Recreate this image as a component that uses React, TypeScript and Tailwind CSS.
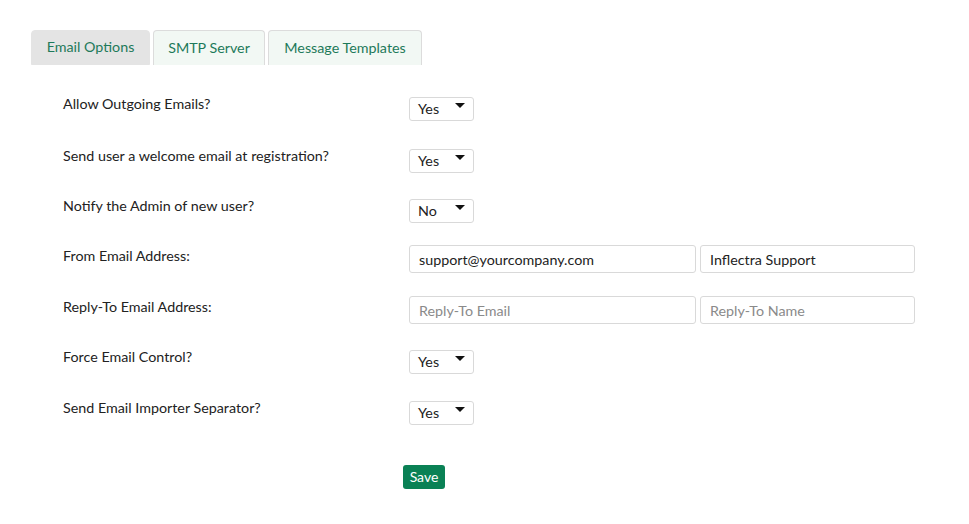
import { useState } from 'react';

const font = { fontFamily: 'Lato, "Open Sans", sans-serif' };

function Caret() {
  return (
    <svg width="10" height="6" viewBox="0 0 10 6" className="absolute right-[8px] top-[5px]">
      <path d="M0 0 L10 0 L5 5 Z" fill="#111" />
    </svg>
  );
}

function Pick({ value }: { value: string }) {
  return (
    <div className="relative mt-[3px] h-[24px] w-[65px] rounded-[3px] border border-[#d9d9d9] bg-white pl-[8px] text-[14.3px] leading-[22px] text-[#222]">
      {value}
      <Caret />
    </div>
  );
}

function Field({ value, placeholder, w }: { value?: string; placeholder: string; w: string }) {
  return (
    <input
      defaultValue={value}
      placeholder={placeholder}
      className={`mt-[-1px] h-[28px] ${w} rounded-[3px] border border-[#d9d9d9] bg-white px-[9px] text-[14.3px] text-[#222] outline-none placeholder:text-[#8a8a8a]`}
      style={font}
    />
  );
}

export default function App() {
  const [tab, setTab] = useState('Email Options');
  const tabs = [
    { name: 'Email Options', w: 'w-[119px]' },
    { name: 'SMTP Server', w: 'w-[112px]' },
    { name: 'Message Templates', w: 'w-[154px]' },
  ];

  const rows = [
    { label: 'Allow Outgoing Emails?', h: 'h-[52px]', kind: 'pick', value: 'Yes' },
    { label: 'Send user a welcome email at registration?', h: 'h-[50px]', kind: 'pick', value: 'Yes' },
    { label: 'Notify the Admin of new user?', h: 'h-[50px]', kind: 'pick', value: 'No' },
    { label: 'From Email Address:', h: 'h-[51px]', kind: 'from' },
    { label: 'Reply-To Email Address:', h: 'h-[50px]', kind: 'reply' },
    { label: 'Force Email Control?', h: 'h-[51px]', kind: 'pick', value: 'Yes' },
    { label: 'Send Email Importer Separator?', h: 'h-[66px]', kind: 'pick', value: 'Yes' },
  ];

  return (
    <div className="min-h-[524px] w-[969px] bg-white pl-[31px] pt-[30px]" style={font}>
      <div className="flex gap-[3px]">
        {tabs.map((t) => (
          <button
            key={t.name}
            onClick={() => setTab(t.name)}
            className={`h-[35px] ${t.w} rounded-t-[4px] border pb-[1px] text-[14.3px] text-[#1e7a5a] ${
              tab === t.name ? 'border-[#e4e4e4] bg-[#e4e4e4]' : 'border-b-0 border-[#dcdcdc] bg-[#f2f8f4]'
            }`}
            style={font}
          >
            {t.name}
          </button>
        ))}
      </div>

      <div className="mt-[29px] pl-[32px]">
        {rows.map((r) => (
          <div key={r.label} className={`flex items-start ${r.h}`}>
            <div className="w-[346px] text-[14.3px] leading-[20px] text-[#222]">{r.label}</div>
            {r.kind === 'pick' && <Pick value={r.value!} />}
            {r.kind === 'from' && (
              <div className="flex gap-[4px]">
                <Field value="support@yourcompany.com" placeholder="Email" w="w-[287px]" />
                <Field value="Inflectra Support" placeholder="Name" w="w-[215px]" />
              </div>
            )}
            {r.kind === 'reply' && (
              <div className="flex gap-[4px]">
                <Field placeholder="Reply-To Email" w="w-[287px]" />
                <Field placeholder="Reply-To Name" w="w-[215px]" />
              </div>
            )}
          </div>
        ))}
        <div className="pl-[340px]">
          <button
            className="h-[24px] w-[42px] rounded-[3px] bg-[#0a8155] text-[14px] text-white"
            style={font}
          >
            Save
          </button>
        </div>
      </div>
    </div>
  );
}
